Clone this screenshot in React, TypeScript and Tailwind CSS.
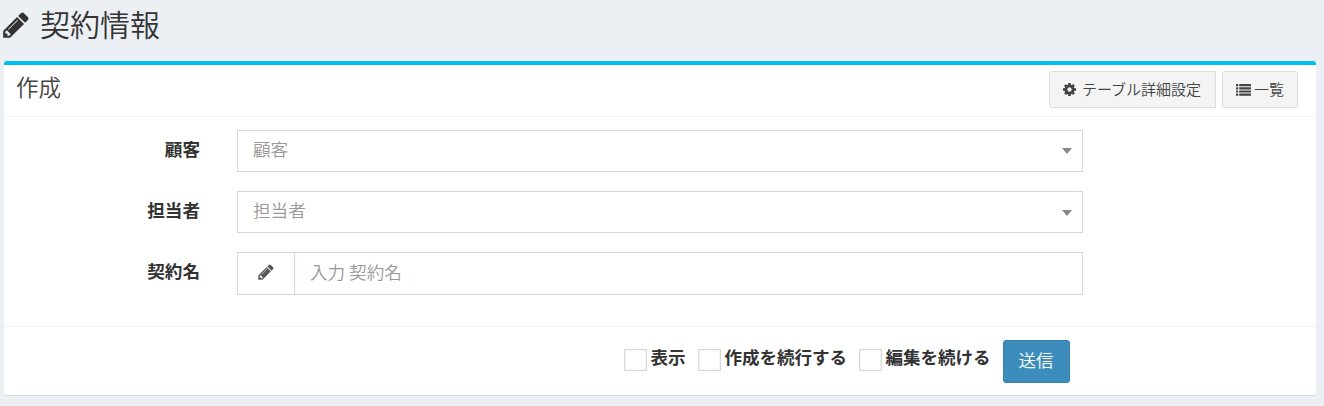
import React from "react";

type IconProps = { className?: string };

function PencilIcon({ className }: IconProps) {
  return (
    <svg viewBox="0 0 1792 1792" fill="currentColor" className={className} aria-hidden="true">
      <path d="M491 1536l91-91-235-235-91 91v107h128v128h107zm523-928q0-22-22-22-10 0-17 7l-542 542q-7 7-7 17 0 22 22 22 10 0 17-7l542-542q7-7 7-17zm-54-192l416 416-832 832h-416v-416zm683 96q0 53-37 90l-166 166-416-416 166-165q36-38 90-38 53 0 91 38l235 234q37 39 37 91z" />
    </svg>
  );
}

function CogIcon({ className }: IconProps) {
  return (
    <svg viewBox="128 128 1536 1536" fill="currentColor" className={className} aria-hidden="true">
      <path d="M1152 896q0-106-75-181t-181-75-181 75-75 181 75 181 181 75 181-75 75-181zm512-109v222q0 12-8 23t-20 13l-185 28q-19 54-39 91 35 50 107 138 10 12 10 25t-9 23q-27 37-99 108t-94 71q-12 0-26-9l-138-108q-44 23-91 38-16 136-29 186-7 28-36 28h-222q-14 0-24.500-8.500t-11.500-21.500l-28-184q-49-16-90-37l-141 107q-10 9-25 9-14 0-25-11-126-114-165-168-7-10-7-23 0-12 8-23 15-21 51-66.500t54-70.500q-27-50-41-99l-183-27q-13-2-21-12.500t-8-23.500v-222q0-12 8-23t19-13l186-28q14-46 39-92-40-57-107-138-10-12-10-24 0-10 9-23 26-36 98.500-107.500t94.500-71.500q13 0 26 10l138 107q44-23 91-38 16-136 29-186 7-28 36-28h222q14 0 24.500 8.500t11.500 21.500l28 184q49 16 90 37l142-107q9-9 24-9 13 0 25 10 129 119 165 170 7 8 7 22 0 12-8 23-15 21-51 66.500t-54 70.500q26 50 41 98l183 28q13 2 21 12.500t8 23.500z" />
    </svg>
  );
}

function ListIcon({ className }: IconProps) {
  return (
    <svg viewBox="0 0 15 12" fill="currentColor" className={className} aria-hidden="true">
      {[0, 3.2, 6.4, 9.6].map((y) => (
        <g key={y}>
          <rect x="0" y={y} width="2.2" height="2.2" rx="0.3" />
          <rect x="3.2" y={y} width="11.8" height="2.2" rx="0.3" />
        </g>
      ))}
    </svg>
  );
}

function Label({ children }: { children: React.ReactNode }) {
  return <div className="w-[196px] shrink-0 pt-[6px] text-right text-[17.6px] leading-[26px] font-bold">{children}</div>;
}

function SelectRow({ label, arrowClass }: { label: string; arrowClass: string }) {
  return (
    <div className="mb-[19px] flex">
      <Label>{label}</Label>
      <div className="ml-[37px] flex h-[42px] w-[846px] items-start justify-between border border-[#d2d6de] pt-[5px] pr-[10px] pl-[15px]">
        <span className="text-[17.6px] leading-[26px] font-[350] text-[#999]">{label}</span>
        <svg viewBox="0 0 10 6" className={`h-[6px] w-[10px] fill-[#888] ${arrowClass}`} aria-hidden="true">
          <path d="M0 0h10L5 6z" />
        </svg>
      </div>
    </div>
  );
}

function CheckOption({ label, className }: { label: string; className?: string }) {
  return (
    <label className={`flex ${className ?? ""}`}>
      <span className="mt-[9px] h-[22px] w-[23px] border border-[#d9d9d9] bg-white shadow-[inset_0_0_0_1px_#f3f3f3]" />
      <span className="ml-[3.5px] pt-[4px] text-[17.5px] leading-[26px] font-bold whitespace-nowrap">{label}</span>
    </label>
  );
}

export default function App() {
  return (
    <div className="h-[406px] overflow-hidden bg-[#ecf0f5] font-['Noto_Sans_CJK_JP',sans-serif] text-[#333]">
      <h1 className="flex h-[61px] items-start pl-[1px] font-[350]">
        <PencilIcon className="mt-[10px] h-[30px] w-[30px]" />
        <span className="mt-[2px] ml-[9px] text-[30px] leading-[42px]">契約情報</span>
      </h1>
      <main className="mr-[8px] ml-[4px] h-[334px] rounded-[3px] border-t-4 border-[#00c0ef] bg-white shadow-[0_1px_1px_rgba(0,0,0,0.1)]">
        <header className="flex h-[52px] items-start border-b border-[#f4f4f4] pr-[18px] pl-[12px]">
          <h2 className="mt-[5px] text-[22.5px] leading-[32px] font-[350] text-[#444]">作成</h2>
          <div className="mt-[6px] ml-auto flex gap-[6px] text-[15px] leading-[22px] font-[350] text-[#444]">
            <button className="flex h-[37px] w-[167px] items-center rounded-l-[3px] border border-[#ddd] bg-[#f4f4f4] pl-[13px] whitespace-nowrap">
              <CogIcon className="mr-[6px] h-[13px] w-[13px]" />
              <span className="pb-[2px]">テーブル詳細設定</span>
            </button>
            <button className="flex h-[37px] w-[76px] items-center rounded-[3px] border border-[#ddd] bg-[#f4f4f4] pl-[13px] whitespace-nowrap">
              <ListIcon className="mr-[3px] h-[12px] w-[15px]" />
              <span className="pb-[2px]">一覧</span>
            </button>
          </div>
        </header>
        <section className="h-[209px] pt-[13px]">
          <SelectRow label="顧客" arrowClass="mt-[12px]" />
          <SelectRow label="担当者" arrowClass="mt-[13px]" />
          <div className="flex">
            <Label>契約名</Label>
            <div className="ml-[37px] flex h-[43px] w-[846px] border border-[#d2d6de]">
              <div className="flex w-[57px] justify-center border-r border-[#d2d6de] pt-[10px] text-[#555]">
                <PencilIcon className="h-[18px] w-[18px]" />
              </div>
              <span className="pt-[6px] pl-[15px] text-[17.6px] leading-[26px] font-[350] text-[#999]">入力 契約名</span>
            </div>
          </div>
        </section>
        <footer className="flex h-[69px] items-start border-t border-[#f4f4f4] pt-[13px] pl-[620px]">
          <CheckOption label="表示" />
          <CheckOption label="作成を続行する" className="ml-[12.5px]" />
          <CheckOption label="編集を続ける" className="ml-[12px]" />
          <button className="ml-[12px] h-[43px] w-[67px] rounded-[3px] border border-[#367fa9] bg-[#3c8dbc] pb-[3px] text-[17.5px] leading-[26px] font-[350] text-white">
            送信
          </button>
        </footer>
      </main>
    </div>
  );
}
